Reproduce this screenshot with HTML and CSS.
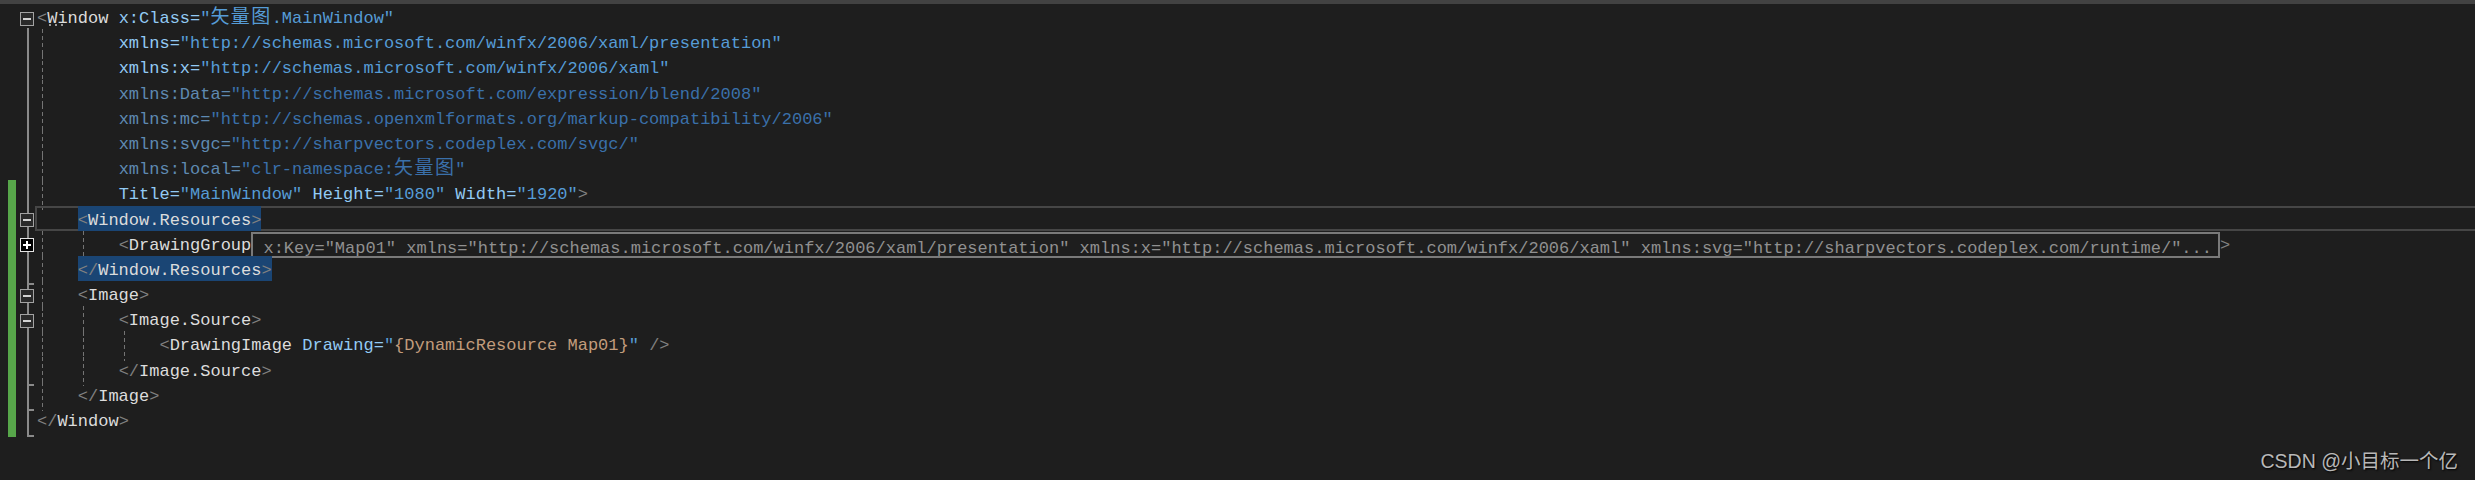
FILE: index.html
```html
<!DOCTYPE html>
<html lang="zh">
<head>
<meta charset="utf-8">
<title>MainWindow.xaml</title>
<link rel="stylesheet" href="styles.css">
</head>
<body>
<div class="topbar"></div>
<div class="editor">
  <div class="row">
    <span class="gut"></span><span class="chg"></span>
    <span class="ol first"><i class="fold"></i></span>
    <span class="code"><span class="d">&lt;</span><span class="e"><span class="hint">W</span>indow</span> <span class="a">x:Class=</span><span class="v">"<span class="cjk">矢量图</span>.MainWindow"</span></span>
  </div>
  <div class="row">
    <span class="gut"></span><span class="chg"></span>
    <span class="ol"></span>
    <span class="code g0">        <span class="a">xmlns=</span><span class="v">"http://schemas.microsoft.com/winfx/2006/xaml/presentation"</span></span>
  </div>
  <div class="row">
    <span class="gut"></span><span class="chg"></span>
    <span class="ol"></span>
    <span class="code g0">        <span class="a">xmlns:x=</span><span class="v">"http://schemas.microsoft.com/winfx/2006/xaml"</span></span>
  </div>
  <div class="row">
    <span class="gut"></span><span class="chg"></span>
    <span class="ol"></span>
    <span class="code g0">        <span class="af">xmlns:Data=</span><span class="vf">"http://schemas.microsoft.com/expression/blend/2008"</span></span>
  </div>
  <div class="row">
    <span class="gut"></span><span class="chg"></span>
    <span class="ol"></span>
    <span class="code g0">        <span class="af">xmlns:mc=</span><span class="vf">"http://schemas.openxmlformats.org/markup-compatibility/2006"</span></span>
  </div>
  <div class="row">
    <span class="gut"></span><span class="chg"></span>
    <span class="ol"></span>
    <span class="code g0">        <span class="af">xmlns:svgc=</span><span class="vf">"http://sharpvectors.codeplex.com/svgc/"</span></span>
  </div>
  <div class="row">
    <span class="gut"></span><span class="chg"></span>
    <span class="ol"></span>
    <span class="code g0">        <span class="af">xmlns:local=</span><span class="vf">"clr-namespace:<span class="cjk">矢量图</span>"</span></span>
  </div>
  <div class="row mod">
    <span class="gut"></span><span class="chg"></span>
    <span class="ol"></span>
    <span class="code g0">        <span class="a">Title=</span><span class="v">"MainWindow"</span> <span class="a">Height=</span><span class="v">"1080"</span> <span class="a">Width=</span><span class="v">"1920"</span><span class="d">&gt;</span></span>
  </div>
  <div class="row mod cur">
    <span class="gut"></span><span class="chg"></span>
    <span class="ol"><i class="fold"></i></span>
    <span class="code">    <span class="sel"><span class="d">&lt;</span><span class="e">Window.Resources</span><span class="d">&gt;</span></span></span>
  </div>
  <div class="row mod">
    <span class="gut"></span><span class="chg"></span>
    <span class="ol"><i class="fold plus"></i></span>
    <span class="code g01">        <span class="d">&lt;</span><span class="e">DrawingGroup</span><span class="collapsed"> x:Key="Map01" xmlns="http://schemas.microsoft.com/winfx/2006/xaml/presentation" xmlns:x="http://schemas.microsoft.com/winfx/2006/xaml" xmlns:svg="http://sharpvectors.codeplex.com/runtime/"...</span><span class="d">&gt;</span></span>
  </div>
  <div class="row mod">
    <span class="gut"></span><span class="chg"></span>
    <span class="ol end"></span>
    <span class="code g0">    <span class="sel"><span class="d">&lt;/</span><span class="e">Window.Resources</span><span class="d">&gt;</span></span></span>
  </div>
  <div class="row mod">
    <span class="gut"></span><span class="chg"></span>
    <span class="ol"><i class="fold"></i></span>
    <span class="code g0">    <span class="d">&lt;</span><span class="e">Image</span><span class="d">&gt;</span></span>
  </div>
  <div class="row mod">
    <span class="gut"></span><span class="chg"></span>
    <span class="ol"><i class="fold"></i></span>
    <span class="code g01">        <span class="d">&lt;</span><span class="e">Image.Source</span><span class="d">&gt;</span></span>
  </div>
  <div class="row mod">
    <span class="gut"></span><span class="chg"></span>
    <span class="ol"></span>
    <span class="code g012">            <span class="d">&lt;</span><span class="e">DrawingImage</span> <span class="a">Drawing=</span><span class="v">"</span><span class="m">{DynamicResource Map01}</span><span class="v">"</span> <span class="d">/&gt;</span></span>
  </div>
  <div class="row mod">
    <span class="gut"></span><span class="chg"></span>
    <span class="ol end"></span>
    <span class="code g01">        <span class="d">&lt;/</span><span class="e">Image.Source</span><span class="d">&gt;</span></span>
  </div>
  <div class="row mod">
    <span class="gut"></span><span class="chg"></span>
    <span class="ol end"></span>
    <span class="code g0">    <span class="d">&lt;/</span><span class="e">Image</span><span class="d">&gt;</span></span>
  </div>
  <div class="row mod">
    <span class="gut"></span><span class="chg"></span>
    <span class="ol end"></span>
    <span class="code"><span class="d">&lt;/</span><span class="e">Window</span><span class="d">&gt;</span></span>
  </div>
</div>
<div class="wm">CSDN @小目标一个亿</div>
</body>
</html>
```

FILE: styles.css
```css
html, body {
  margin: 0;
  padding: 0;
  background: #1e1e1e;
}
body {
  width: 2475px;
  height: 480px;
  overflow: hidden;
  position: relative;
}
.topbar {
  height: 4px;
  background: #424242;
}
.editor {
  display: flex;
  flex-direction: column;
}
.row {
  display: grid;
  grid-template-columns: 8px 8px 21px 1fr;
  height: 25.2px;
  position: relative;
}
.row.mod .chg {
  background: #57a64a;
}
.row.cur::before {
  content: "";
  position: absolute;
  left: 35px;
  right: -4px;
  top: 0;
  bottom: 0;
  border: 2px solid #464646;
  z-index: 0;
}
.ol {
  display: flex;
  align-items: center;
  background: linear-gradient(#8a8a8a, #8a8a8a) 11px 0 / 2px 100% no-repeat;
}
.ol.first {
  background-position: 11px 100%;
  background-size: 2px 6px;
}
.ol.end {
  background-image: linear-gradient(#8a8a8a, #8a8a8a), linear-gradient(#8a8a8a, #8a8a8a);
  background-position: 11px 0, 11px 100%;
  background-size: 2px 100%, 7px 2px;
  background-repeat: no-repeat;
}
.fold {
  display: block;
  width: 14px;
  height: 14px;
  margin-left: 4px;
  box-sizing: border-box;
  border: 1px solid #a2a2a2;
  background: #2a2a2a;
  position: relative;
}
.fold::before {
  content: "";
  position: absolute;
  left: 2px;
  right: 2px;
  top: 5px;
  height: 2px;
  background: #d2d2d2;
}
.fold.plus {
  border-color: #e4e4e4;
  background: #000;
}
.fold.plus::before {
  background: #fff;
}
.fold.plus::after {
  content: "";
  position: absolute;
  top: 2px;
  bottom: 2px;
  left: 5px;
  width: 2px;
  background: #fff;
}
.code {
  white-space: pre;
  font-family: "Liberation Mono", monospace;
  font-size: 17px;
  line-height: 29.6px;
  color: #dcdcdc;
  position: relative;
  z-index: 1;
}
.g0 {
  background: repeating-linear-gradient(to bottom, #747474 0 4px, transparent 4px 7px) 5px 0 / 1px 100% no-repeat;
}
.g01 {
  background:
    repeating-linear-gradient(to bottom, #747474 0 4px, transparent 4px 7px) 5px 0 / 1px 100% no-repeat,
    repeating-linear-gradient(to bottom, #747474 0 4px, transparent 4px 7px) 46px 0 / 1px 100% no-repeat;
}
.g012 {
  background:
    repeating-linear-gradient(to bottom, #747474 0 4px, transparent 4px 7px) 5px 0 / 1px 100% no-repeat,
    repeating-linear-gradient(to bottom, #747474 0 4px, transparent 4px 7px) 46px 0 / 1px 100% no-repeat,
    repeating-linear-gradient(to bottom, #747474 0 4px, transparent 4px 7px) 87px 0 / 1px 100% no-repeat;
}
.d { color: #808080; }
.e { color: #dcdcdc; }
.a { color: #92caf4; }
.v { color: #569cd6; }
.af { color: #5f8ab2; }
.vf { color: #3a70aa; }
.m { color: #c29c7c; }
.cjk {
  font-family: "Noto Sans CJK SC", sans-serif;
  font-size: 19px;
  letter-spacing: 1.4px;
  line-height: 0;
}
.hint {
  position: relative;
}
.hint::after {
  content: "";
  position: absolute;
  left: 0;
  top: 15px;
  width: 18px;
  height: 2px;
  background: radial-gradient(circle, #9a9a9a 0.9px, transparent 1.3px) 0 0 / 6px 2px repeat-x;
}
.sel {
  display: inline-block;
  height: 25.2px;
  background: #1a4574;
}
.collapsed {
  display: inline-block;
  box-sizing: border-box;
  height: 26px;
  border: 2px solid #7a7a7a;
  padding-right: 6px;
  line-height: 29.2px;
  vertical-align: -3px;
  color: #909090;
}
.wm {
  position: absolute;
  right: 17px;
  top: 449px;
  font-family: "Liberation Sans", "Noto Sans CJK SC", sans-serif;
  font-size: 19.5px;
  line-height: 24px;
  color: #b8b8b8;
  text-shadow: 1px 1px 2px #000;
}
```
